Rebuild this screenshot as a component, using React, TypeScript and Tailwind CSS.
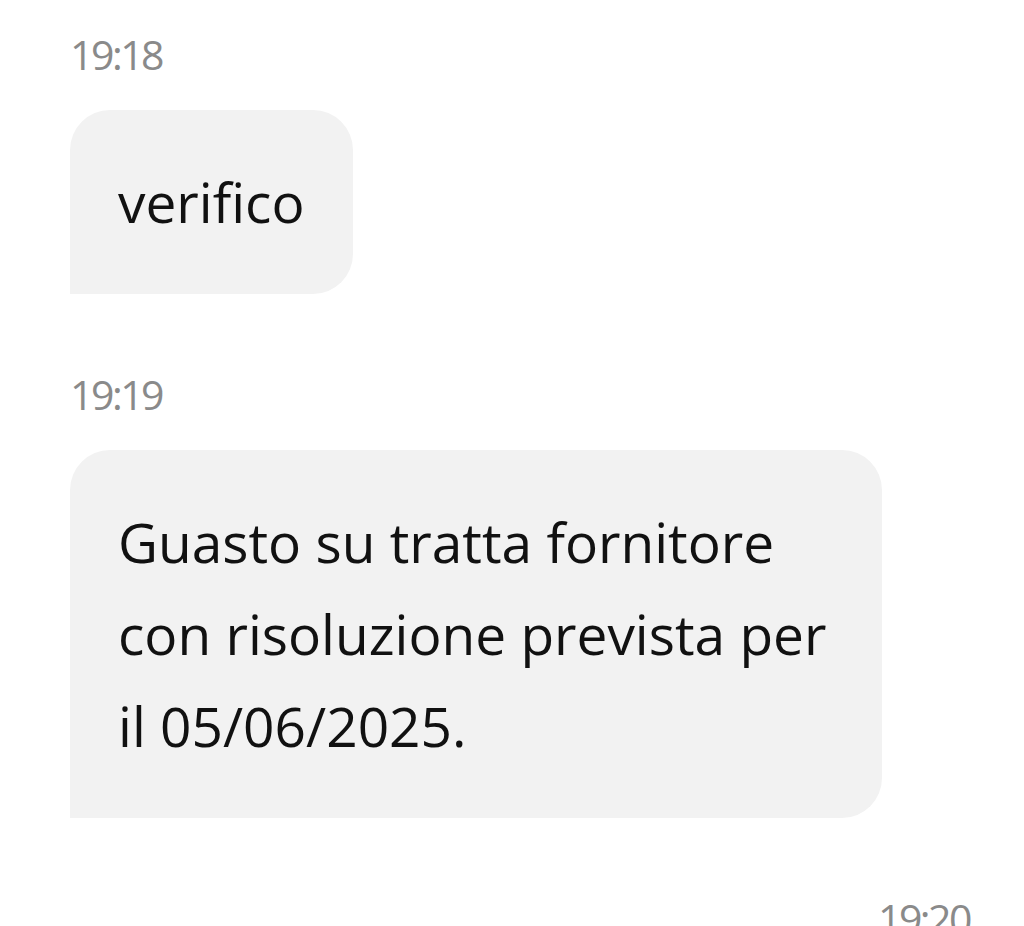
import React from 'react';

const MESSAGES = [
  { time: '19:18', wide: false, lines: ['verifico'] },
  {
    time: '19:19',
    wide: true,
    lines: ['Guasto su tratta fornitore', 'con risoluzione prevista per', 'il 05/06/2025.'],
  },
];

export default function App() {
  return (
    <main
      className="min-h-screen bg-white pl-[70px] pr-[54px] pt-[26px] overflow-hidden"
      style={{ fontFamily: '"Open Sans", "Noto Sans", sans-serif' }}
    >
      {MESSAGES.map((msg) => (
        <div key={msg.time} className="mb-[72px]">
          <div className="text-[41px] leading-[56px] tracking-[-2.5px] text-[#8a8a8a] mb-[28px]">{msg.time}</div>
          <div
            className={`${msg.wide ? 'w-[812px]' : 'inline-block'} bg-[#f2f2f2] rounded-[40px] rounded-bl-none px-[48px] py-[46px] text-[55px] leading-[92px] text-[#111]`}
          >
            {msg.lines.map((line) => (
              <div key={line}>{line}</div>
            ))}
          </div>
        </div>
      ))}

      {/* ultimo messaggio, tagliato in basso come nello screenshot */}
      <div className="text-right text-[41px] leading-[56px] tracking-[-2.5px] text-[#8a8a8a]">19:20</div>
    </main>
  );
}
